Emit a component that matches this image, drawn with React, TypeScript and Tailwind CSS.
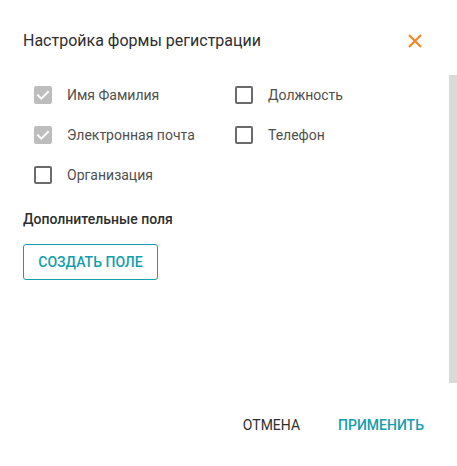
import React from 'react';

type Field = { label: string; checked: boolean; disabled?: boolean };

const fields: Field[] = [
  { label: 'Имя Фамилия', checked: true, disabled: true },
  { label: 'Должность', checked: false },
  { label: 'Электронная почта', checked: true, disabled: true },
  { label: 'Телефон', checked: false },
  { label: 'Организация', checked: false },
];

function CheckBox({ checked }: { checked: boolean }) {
  if (checked) {
    return (
      <span className="flex h-[18px] w-[18px] shrink-0 items-center justify-center rounded-[2px] bg-[#bdbdbd]">
        <svg width="18" height="18" viewBox="0 0 18 18" fill="none">
          <path d="M4 9.3l3.3 3.3L14 5.9" stroke="#fff" strokeWidth="2" strokeLinecap="square" />
        </svg>
      </span>
    );
  }
  return <span className="block h-[18px] w-[18px] shrink-0 rounded-[2px] border-2 border-[#6b6b6b]" />;
}

export default function App() {
  return (
    <div
      className="flex h-[466px] w-[457px] flex-col bg-white"
      style={{ fontFamily: 'Roboto, "Liberation Sans", sans-serif' }}
    >
      {/* header */}
      <div className="flex h-[75px] shrink-0 items-start justify-between pl-[23px] pr-[35px] pt-[29px]">
        <h2 className="text-[16px] leading-[24px] font-normal text-[#2e2e2e]">Настройка формы регистрации</h2>
        <button className="mt-[5px] flex h-[14px] w-[14px] items-center justify-center">
          <svg width="14" height="14" viewBox="0 0 14 14" fill="none">
            <path d="M1 1l12 12M13 1L1 13" stroke="#f5821f" strokeWidth="2" />
          </svg>
        </button>
      </div>

      {/* body */}
      <div className="flex h-[308px] shrink-0">
        <div className="flex-1 pl-[23px]">
          <div className="grid grid-cols-[201px_1fr] pl-[11px]">
            {fields.map((f) => (
              <label key={f.label} className="flex h-[40px] items-center gap-[15px]">
                <CheckBox checked={f.checked} />
                <span className="text-[14px] leading-[20px] text-[#4f4f4f]">{f.label}</span>
              </label>
            ))}
          </div>
          <h3 className="mt-[14px] text-[14px] leading-[20px] font-medium text-[#2e2e2e]">Дополнительные поля</h3>
          <button className="mt-[15px] flex h-[36px] w-[135px] items-center justify-center rounded-[3px] border border-[#139eac] text-[14px] font-medium uppercase text-[#139eac]">
            Создать поле
          </button>
        </div>
        <div className="w-[8px] bg-[#dadada]" />
      </div>

      {/* footer */}
      <div className="flex justify-end gap-[38px] pr-[33px] pt-[32px]">
        <button className="text-[14px] leading-[20px] font-normal uppercase text-[#2e2e2e]">Отмена</button>
        <button className="text-[14px] leading-[20px] font-medium uppercase text-[#139eac]">Применить</button>
      </div>
    </div>
  );
}
